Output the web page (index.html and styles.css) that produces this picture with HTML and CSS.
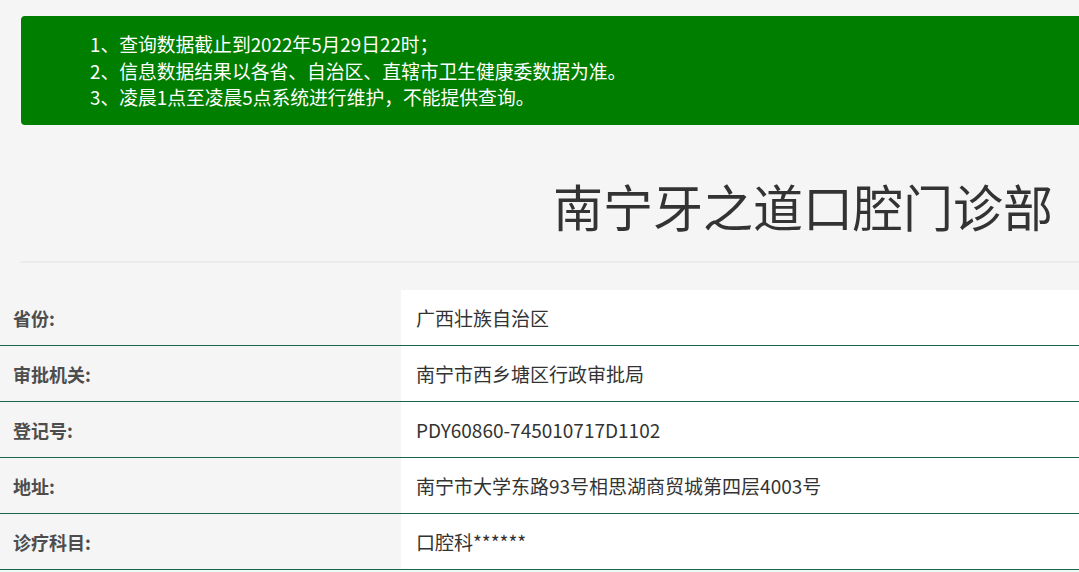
FILE: index.html
```html
<!DOCTYPE html>
<html lang="zh-CN">
<head>
<meta charset="utf-8">
<title>南宁牙之道口腔门诊部</title>
<link rel="stylesheet" href="styles.css">
</head>
<body>
<div class="page">
  <div class="notice">
    <p>1、查询数据截止到2022年5月29日22时；</p>
    <p>2、信息数据结果以各省、自治区、直辖市卫生健康委数据为准。</p>
    <p>3、凌晨1点至凌晨5点系统进行维护，不能提供查询。</p>
  </div>
  <h1 class="title">南宁牙之道口腔门诊部</h1>
  <div class="rule"></div>
  <table class="info">
    <tr><th>省份:</th><td>广西壮族自治区</td></tr>
    <tr><th>审批机关:</th><td>南宁市西乡塘区行政审批局</td></tr>
    <tr><th>登记号:</th><td>PDY60860-745010717D1102</td></tr>
    <tr><th>地址:</th><td>南宁市大学东路93号相思湖商贸城第四层4003号</td></tr>
    <tr><th>诊疗科目:</th><td>口腔科******</td></tr>
    <tr class="next"><th></th><td></td></tr>
  </table>
</div>
</body>
</html>
```

FILE: styles.css
```css
html, body {
  margin: 0;
  padding: 0;
  background: #f5f5f5;
  overflow: hidden;
}
body {
  font-family: "Noto Sans CJK SC", "Noto Sans", sans-serif;
  color: #333;
}
.page {
  display: flex;
  flex-direction: column;
  padding-top: 16px;
}
.notice {
  margin-left: 21px;
  background: #007e00;
  border-radius: 4px 0 0 4px;
  color: #fff;
  padding: 15px 0 17px 69px;
  height: 77px;
}
.notice p {
  margin: 0;
  font-size: 18.8px;
  line-height: 26.5px;
  white-space: nowrap;
}
.title {
  margin: 45px 26px 0 0;
  text-align: right;
  font-size: 50px;
  font-weight: normal;
  line-height: 70px;
  color: #333;
}
.rule {
  margin: 21px 0 0 20px;
  height: 2px;
  background: #ececec;
}
.info {
  margin-top: 27px;
  border-collapse: collapse;
  width: 100%;
}
.info th {
  width: 401px;
  box-sizing: border-box;
  text-align: left;
  padding: 0 0 0 13px;
  font-size: 18px;
  font-weight: bold;
  color: #4d4d4d;
  background: #f5f5f5;
  height: 55px;
}
.info td {
  background: #fff;
  padding: 0 0 0 15px;
  font-size: 19px;
  color: #333;
  height: 55px;
}
.info tr {
  border-bottom: 1px solid #17674a;
}
.info tr.next th,
.info tr.next td {
  background: #eefaf6;
}
```
